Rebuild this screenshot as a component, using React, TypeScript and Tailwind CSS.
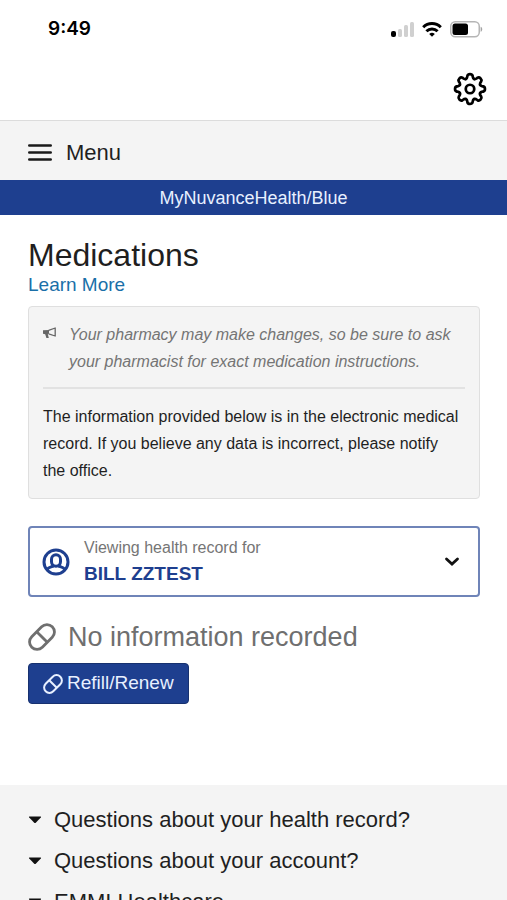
import * as React from 'react';

const questions = [
  'Questions about your health record?',
  'Questions about your account?',
  'EMMI Healthcare',
];

const gearTeeth = [0, 45, 90, 135, 180, 225, 270, 315];

function SignalIcon() {
  return (
    <svg width="23" height="16" viewBox="0 0 23 16" aria-hidden="true">
      <rect x="0" y="10" width="5" height="6" rx="2" fill="#000" />
      <rect x="7" y="8" width="4" height="8" rx="1.5" fill="#d0d0d0" />
      <rect x="13" y="4" width="4" height="12" rx="1.5" fill="#d0d0d0" />
      <rect x="19" y="1" width="4" height="15" rx="1.5" fill="#d0d0d0" />
    </svg>
  );
}

function WifiIcon() {
  return (
    <svg width="20" height="15" viewBox="0 0 20 15" fill="none" stroke="#000" strokeWidth="3" aria-hidden="true">
      <path d="M1.2 5.2a12.6 12.6 0 0 1 17.6 0" />
      <path d="M4.4 9.2a8 8 0 0 1 11.2 0" />
      <path d="M10 14.8 7.2 12a4.2 4.2 0 0 1 5.6 0Z" fill="#000" stroke="none" />
    </svg>
  );
}

function BatteryIcon() {
  return (
    <svg width="33" height="17" viewBox="0 0 33 17" aria-hidden="true">
      <rect x="0.75" y="0.75" width="28.5" height="15" rx="4.5" fill="none" stroke="#b5b5b5" strokeWidth="1.5" />
      <rect x="2.5" y="2.5" width="15.5" height="11.5" rx="2.5" fill="#000" />
      <path d="M30.6 5.8c2.2.6 2.2 4.4 0 5Z" fill="#a3a3a3" />
    </svg>
  );
}

function GearIcon() {
  return (
    <svg width="34" height="34" viewBox="-50 -50 100 100" fill="none" stroke="#000" strokeWidth="8" strokeLinecap="round" aria-hidden="true">
      {gearTeeth.map((angle) => (
        <path
          key={angle}
          transform={`rotate(${angle})`}
          d="M-12.2-29.6C-7.5-31.5-8.4-36-7.6-39C-6.6-42.500-4-44 0-44C4-44 6.600-42.500 7.600-39C8.400-36 7.500-31.500 12.2-29.6"
        />
      ))}
      <circle r="12.5" />
    </svg>
  );
}

function MegaphoneIcon() {
  return (
    <svg width="14" height="12" viewBox="0 0 14 12" aria-hidden="true">
      <path d="M0 3.2 6 3v3.8L4.8 7l1 4H3.4L2.2 7.2 0 6.8Z" fill="#666" />
      <path d="M5.6 3.4 12.2 1v8L5.6 6.8" fill="none" stroke="#666" strokeWidth="1.3" strokeLinejoin="round" />
    </svg>
  );
}

function PersonIcon() {
  return (
    <svg width="28" height="28" viewBox="0 0 28 28" fill="none" stroke="#1e3f8f" strokeWidth="3" aria-hidden="true">
      <circle cx="14" cy="14" r="12" />
      <rect x="9.5" y="6.8" width="9" height="11.4" rx="4.5" />
      <path d="M5 21.5c1.5-2 3.500-2.300 6.500-3.500M23 21.500c-1.500-2-3.500-2.300-6.500-3.500" />
    </svg>
  );
}

function PillIcon({ className }: { className: string }) {
  return (
    <svg className={className} viewBox="0 0 28 28" fill="none" stroke="currentColor" strokeWidth="2.8" aria-hidden="true">
      <rect x="-0.5" y="6.500" width="29" height="15" rx="7.500" transform="rotate(-45 14 14)" />
      <path d="m8.700 8.700 10.600 10.600" />
    </svg>
  );
}

function CaretIcon() {
  return (
    <svg width="14" height="8" viewBox="0 0 14 8" aria-hidden="true">
      <path d="M1.5.5h11q1 0 .3.9L8 6.6q-1 1-2 0L1.2 1.4Q.5.5 1.5.5Z" fill="#111" />
    </svg>
  );
}

export default function App() {
  return (
    <div className="min-h-screen bg-white font-['Liberation_Sans',Arial,sans-serif] text-[#1f1f1f]">
      <div className="flex h-[58px] items-center justify-between pl-12 pr-6 text-black">
        <span className="font-[Inter,sans-serif] text-[19px] font-semibold leading-6">9:49</span>
        <div className="flex items-center gap-2">
          <SignalIcon />
          <WifiIcon />
          <BatteryIcon />
        </div>
      </div>

      <header className="flex h-[62px] items-center justify-end pr-5">
        <button type="button" aria-label="Settings">
          <GearIcon />
        </button>
      </header>

      <nav className="border-t border-[#dcdcdc] bg-[#f4f4f4] px-7">
        <button type="button" className="flex h-[59px] items-center gap-3.5 pt-1">
          <svg width="24" height="18" viewBox="0 0 24 18" stroke="#1a1a1a" strokeWidth="2.6" strokeLinecap="round" aria-hidden="true">
            <path d="M1.3 1.500h21.400M1.300 8.500h21.400M1.300 15.500h21.400" />
          </svg>
          <span className="text-[22px] leading-7">Menu</span>
        </button>
      </nav>

      <div className="flex h-[35px] items-center justify-center bg-[#1e3f8f] text-[18px] leading-6 text-[#e8f0ff]">
        MyNuvanceHealth/Blue
      </div>

      <main className="pl-7 pr-[27px] pt-5">
        <h1 className="text-[32px] leading-10">Medications</h1>
        <a href="#learn-more" className="block w-fit text-[19px] leading-5 text-[#1a6fa8]">
          Learn More
        </a>

        {/* Notice */}
        <section className="mt-[11px] rounded border border-[#dfdfdf] bg-[#f4f4f4] px-3.5 pb-3.5 pt-3.5 text-[16px] leading-[27px]">
          <div className="flex gap-3 border-b-2 border-[#e2e2e2] pb-3">
            <span className="pt-1.5">
              <MegaphoneIcon />
            </span>
            <p className="italic text-[#757575]">
              Your pharmacy may make changes, so be sure to ask your pharmacist for exact medication instructions.
            </p>
          </div>
          <p className="pr-1 pt-3.5">
            The information provided below is in the electronic medical record. If you believe any data is
            incorrect, please notify the office.
          </p>
        </section>

        {/* Record switcher */}
        <button
          type="button"
          aria-haspopup="listbox"
          className="mt-[27px] flex w-full items-center rounded border-2 border-[#6f84b8] px-3 py-[7px] text-left"
        >
          <PersonIcon />
          <span className="ml-3.5 flex-1">
            <span className="block text-[16px] leading-[25px] text-[#757575]">Viewing health record for</span>
            <span className="block text-[19px] font-bold leading-7 text-[#1e3f8f]">BILL ZZTEST</span>
          </span>
          <svg className="mr-1.5" width="16" height="10" viewBox="0 0 16 10" fill="none" stroke="#111" strokeWidth="2.8" aria-hidden="true">
            <path d="m2.5 2 5.5 5 5.5-5" strokeLinecap="round" />
          </svg>
        </button>

        <h2 className="mt-6 flex items-center gap-3 text-[27px] leading-8 text-[#6f6f6f]">
          <PillIcon className="size-7" />
          No information recorded
        </h2>
        <button
          type="button"
          className="mt-2.5 flex h-[41px] items-center gap-1 rounded border border-[#17316f] bg-[#1e3f8f] px-3.5 text-[19px] text-[#e8f0ff]"
        >
          <PillIcon className="size-5" />
          Refill/Renew
        </button>
      </main>

      <footer className="mt-[81px] bg-[#f4f4f4] px-7 py-3.5">
        {questions.map((question) => (
          <button
            key={question}
            type="button"
            aria-expanded={false}
            className="flex h-[41px] w-full items-center gap-3 text-left text-[22px] leading-7"
          >
            <CaretIcon />
            {question}
          </button>
        ))}
      </footer>
    </div>
  );
}
